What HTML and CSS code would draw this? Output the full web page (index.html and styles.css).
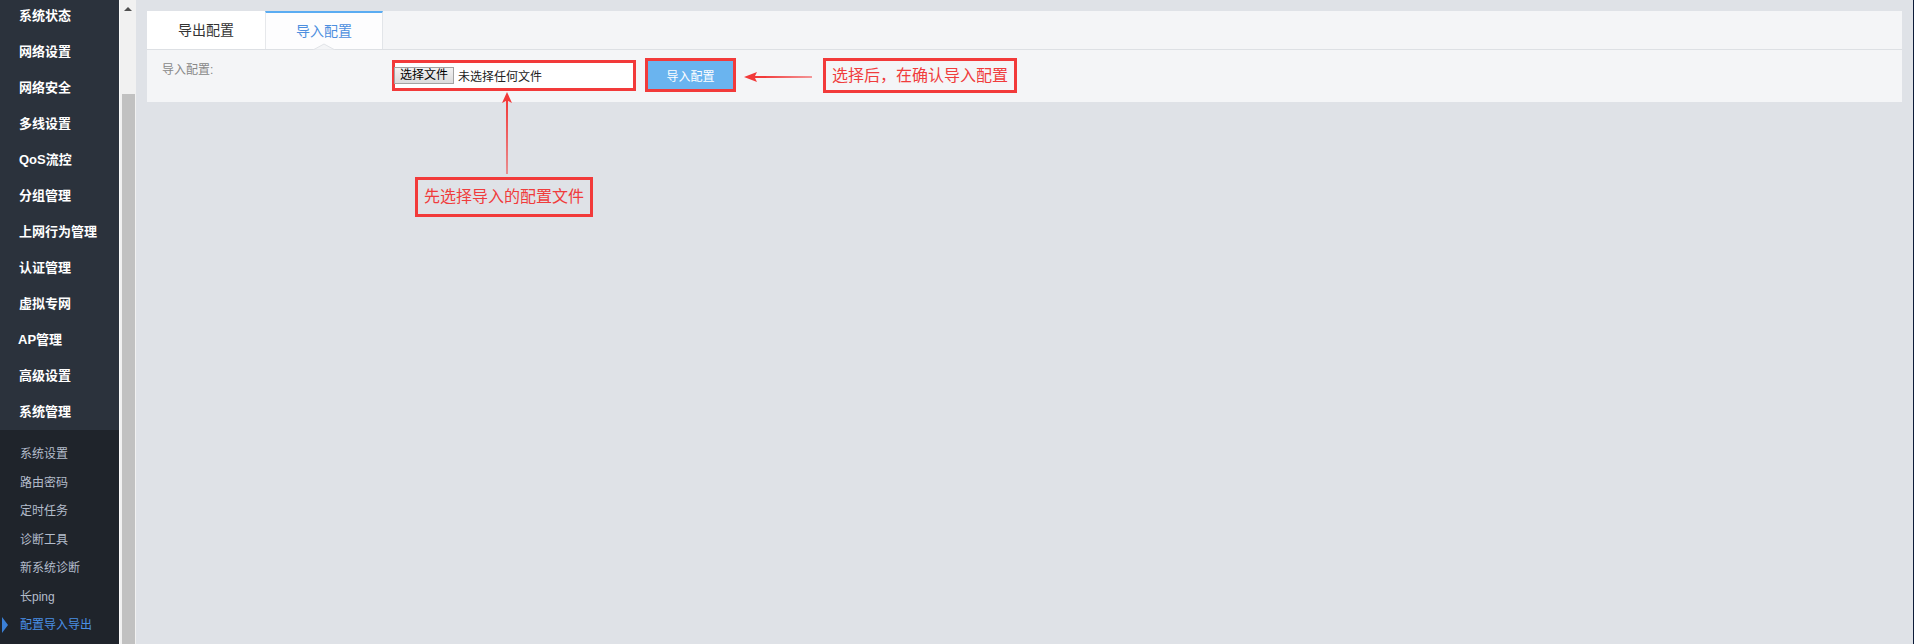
FILE: index.html
```html
<!DOCTYPE HTML>
<html>

    <head>
        <meta name="viewport" content="width=device-width, initial-scale=1">
        <title>配置导入导出</title>
        <link rel="stylesheet" href="styles.css">
    </head>

    <body>
        <aside class="sidebar">
            <ul class="menu">
                <li class="menu-item">系统状态</li>
                <li class="menu-item">网络设置</li>
                <li class="menu-item">网络安全</li>
                <li class="menu-item">多线设置</li>
                <li class="menu-item">QoS流控</li>
                <li class="menu-item">分组管理</li>
                <li class="menu-item">上网行为管理</li>
                <li class="menu-item">认证管理</li>
                <li class="menu-item">虚拟专网</li>
                <li class="menu-item ap">AP管理</li>
                <li class="menu-item">高级设置</li>
                <li class="menu-item">系统管理</li>
            </ul>
            <ul class="submenu">
                <li class="sub-item">系统设置</li>
                <li class="sub-item">路由密码</li>
                <li class="sub-item">定时任务</li>
                <li class="sub-item">诊断工具</li>
                <li class="sub-item">新系统诊断</li>
                <li class="sub-item">长ping</li>
                <li class="sub-item active">配置导入导出</li>
            </ul>
        </aside>

        <div class="scrollbar">
            <div class="scroll-up"><span class="arrow-up"></span></div>
            <div class="scroll-thumb"></div>
        </div>

        <main class="main">
            <div class="card">
                <div class="tabs">
                    <div class="tab">导出配置</div>
                    <div class="tab current">导入配置
                        <svg class="notch" width="24" height="7" viewBox="0 0 24 7">
                            <polygon points="1,7 12,1 23,7" fill="#f4f5f7" stroke="#e0e3e7" stroke-width="1"/>
                        </svg>
                    </div>
                </div>
                <div class="tab-body">
                    <div class="form-row">
                        <label class="form-label">导入配置:</label>
                        <div class="file-box mark">
                            <span class="file-btn">选择文件</span>
                            <span class="file-name">未选择任何文件</span>
                        </div>
                        <div class="submit-box mark">
                            <button class="submit">导入配置</button>
                        </div>
                        <svg class="arrow-left" width="68" height="12" viewBox="0 0 68 12">
                            <polygon points="0,6 13,1 11,5 68,5.5 68,6.5 11,7 13,11" fill="#f23a3a"/>
                        </svg>
                        <div class="note mark">选择后，在确认导入配置</div>
                    </div>
                </div>

                <svg class="arrow-up-note" width="12" height="82" viewBox="0 0 12 82">
                    <polygon points="6,0 11,11 7,9 6.5,82 5.5,82 5,9 1,11" fill="#f23a3a"/>
                </svg>
                <div class="note mark note-below">先选择导入的配置文件</div>
            </div>
        </main>

        <div class="edge"></div>
    </body>

</html>
```

FILE: styles.css
```css
html, body {
    margin: 0;
    padding: 0;
    height: 644px;
    overflow: hidden;
}

body {
    display: flex;
    font-family: "Liberation Sans", "Noto Sans CJK SC", sans-serif;
    background: #dfe2e7;
}

ul {
    list-style: none;
    margin: 0;
    padding: 0;
}

/* sidebar */
.sidebar {
    width: 119px;
    flex: none;
    background: #2b323c;
    display: flex;
    flex-direction: column;
    overflow: hidden;
}

.menu {
    margin-top: -2px;
}

.menu-item {
    height: 36px;
    line-height: 36px;
    padding-left: 19px;
    color: #fff;
    font-size: 13px;
    font-weight: bold;
    white-space: nowrap;
}

.menu-item.ap {
    padding-left: 18px;
}

.submenu {
    flex: 1;
    background: #1f242b;
    padding-top: 10px;
}

.sub-item {
    position: relative;
    height: 28.5px;
    line-height: 28.5px;
    padding-left: 20px;
    color: #b4bdcb;
    font-size: 12px;
    white-space: nowrap;
}

.sub-item.active {
    color: #4a8fe6;
}

.sub-item.active::before {
    content: "";
    position: absolute;
    left: 2px;
    top: 6px;
    border-left: 6px solid #3b80d8;
    border-top: 8px solid transparent;
    border-bottom: 8px solid transparent;
}

/* fake scrollbar */
.scrollbar {
    width: 16px;
    flex: none;
    background: #f1f1f1;
    border-left: 1px solid #fafafa;
    display: flex;
    flex-direction: column;
    align-items: center;
}

.scroll-up {
    height: 17px;
    display: flex;
    align-items: center;
    justify-content: center;
}

.arrow-up {
    border-bottom: 4px solid #505050;
    border-left: 4px solid transparent;
    border-right: 4px solid transparent;
}

.scroll-thumb {
    width: 13px;
    flex: 1;
    margin-top: 77px;
    background: #c1c1c1;
}

/* main */
.main {
    flex: 1;
    padding: 11px;
}

.edge {
    width: 1px;
    flex: none;
    background: #0d1b38;
}

.card {
    position: relative;
    background: #f4f5f7;
}

.tabs {
    display: flex;
    height: 38px;
    border-bottom: 1px solid #dde0e4;
}

.tab {
    position: relative;
    width: 118px;
    box-sizing: border-box;
    line-height: 38px;
    text-align: center;
    font-size: 14px;
    color: #333;
    background: #fff;
}

.tab.current {
    background: #fdfdfe;
    color: #4d8fdf;
    border-top: 2px solid #5aacf2;
    border-left: 1px solid #e6e8eb;
    border-right: 1px solid #e2e5e9;
    line-height: 36px;
}

.notch {
    position: absolute;
    left: 46px;
    bottom: -1px;
}

.tab-body {
    padding: 8px 15px 9px;
}

.form-row {
    display: flex;
    align-items: flex-start;
}

.form-label {
    width: 230px;
    margin-top: 3px;
    line-height: 18px;
    font-size: 12px;
    color: #888;
}

.mark {
    border: 3px solid #f23a3a;
    box-sizing: border-box;
}

.file-box {
    width: 244px;
    height: 31px;
    margin-top: 2px;
    background: #fff;
    display: flex;
    align-items: center;
}

.file-btn {
    height: 17px;
    line-height: 15px;
    padding: 0 5px;
    margin-left: -1px;
    box-sizing: border-box;
    border: 1px solid #a3a3a3;
    background: linear-gradient(#f2f2f2, #dcdcdc);
    font-size: 12px;
    color: #000;
}

.file-name {
    margin-left: 4px;
    font-size: 12px;
    color: #222;
}

.submit-box {
    margin-left: 9px;
    width: 91px;
    height: 34px;
}

.submit {
    display: block;
    width: 85px;
    height: 28px;
    border: none;
    background: #6ab4ef;
    color: #fff;
    font-family: inherit;
    font-size: 12px;
    padding: 0;
}

.arrow-left {
    margin: 13px 0 0 8px;
}

.note {
    height: 35px;
    line-height: 29px;
    padding: 0 6px;
    margin-left: 11px;
    font-size: 16px;
    color: #f03c3c;
    white-space: nowrap;
}

.note-below {
    position: absolute;
    left: 268px;
    top: 166px;
    width: 178px;
    height: 40px;
    line-height: 34px;
    margin: 0;
    text-align: center;
    padding: 0;
}

.arrow-up-note {
    position: absolute;
    left: 354px;
    top: 81px;
}
```
